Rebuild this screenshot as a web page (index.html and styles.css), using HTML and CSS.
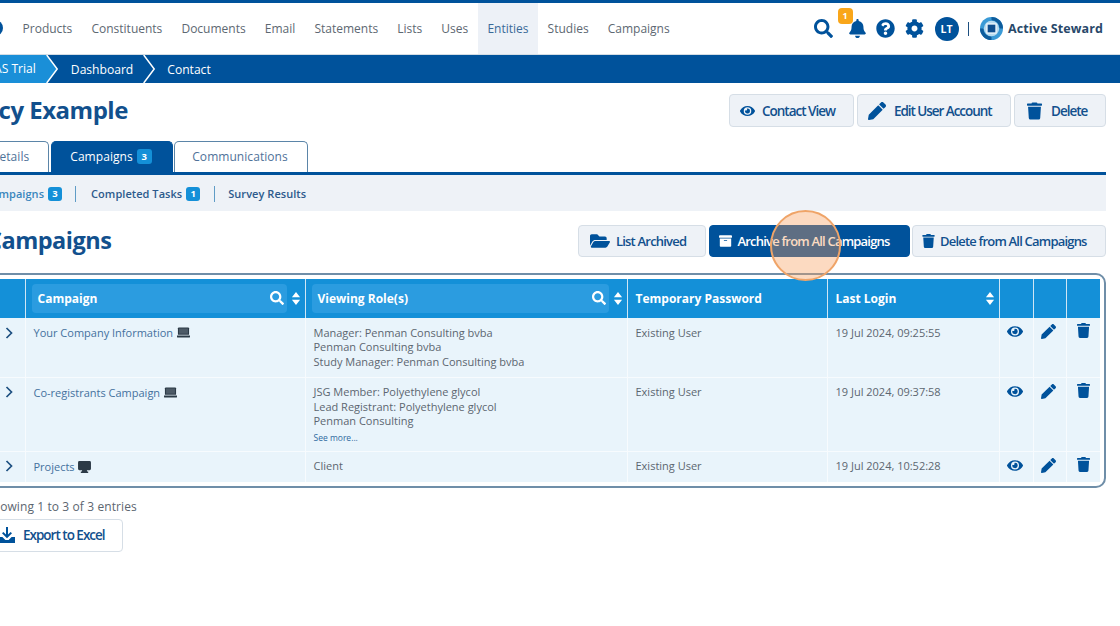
FILE: index.html
```html
<!DOCTYPE html>
<html lang="en">
<head>
<meta charset="utf-8">
<title>Policy Example</title>
<link rel="stylesheet" href="styles.css">
</head>
<body>
<svg class="defs" aria-hidden="true">
  <symbol id="i-search" viewBox="0 0 512 512"><path d="M505 442.7L405.3 343c-4.5-4.5-10.6-7-17-7H372c27.6-35.3 44-79.7 44-128C416 93.1 322.9 0 208 0S0 93.1 0 208s93.1 208 208 208c48.3 0 92.7-16.4 128-44v16.3c0 6.4 2.5 12.5 7 17l99.7 99.7c9.4 9.4 24.6 9.4 33.9 0l28.3-28.3c9.4-9.4 9.4-24.6.1-34zM208 336c-70.7 0-128-57.2-128-128 0-70.7 57.2-128 128-128 70.7 0 128 57.2 128 128 0 70.7-57.2 128-128 128z"/></symbol>
  <symbol id="i-bell" viewBox="0 0 448 512"><path d="M224 512c35.32 0 63.97-28.65 63.97-64H160.03c0 35.35 28.65 64 63.97 64zm215.39-149.71c-19.32-20.76-55.47-51.99-55.47-154.29 0-77.7-54.48-139.9-127.94-155.16V32c0-17.67-14.32-32-31.98-32s-31.98 14.33-31.98 32v20.84C118.56 68.1 64.08 130.3 64.08 208c0 102.3-36.15 133.53-55.47 154.29-6 6.45-8.66 14.16-8.61 21.71.11 16.4 12.98 32 32.1 32h383.8c19.12 0 32-15.6 32.1-32 .05-7.55-2.61-15.27-8.61-21.71z"/></symbol>
  <symbol id="i-help" viewBox="0 0 512 512"><path d="M504 256c0 136.997-111.043 248-248 248S8 392.997 8 256C8 119.083 119.043 8 256 8s248 111.083 248 248zM262.655 90c-54.497 0-89.255 22.957-116.549 63.758-3.536 5.286-2.353 12.415 2.715 16.258l34.699 26.31c5.205 3.947 12.621 3.008 16.665-2.122 17.864-22.658 30.113-35.797 57.303-35.797 20.429 0 45.698 13.148 45.698 32.958 0 14.976-12.363 22.667-32.534 33.976C247.128 238.528 216 254.941 216 296v4c0 6.627 5.373 12 12 12h56c6.627 0 12-5.373 12-12v-1.333c0-28.462 83.186-29.647 83.186-106.667 0-58.002-60.165-102-116.531-102zM256 338c-25.365 0-46 20.635-46 46 0 25.364 20.635 46 46 46s46-20.636 46-46c0-25.365-20.635-46-46-46z"/></symbol>
  <symbol id="i-cog" viewBox="0 0 512 512"><path d="M487.4 315.7l-42.6-24.6c4.3-23.2 4.3-47 0-70.2l42.6-24.6c4.9-2.8 7.1-8.6 5.5-14-11.1-35.6-30-67.8-54.7-94.6-3.8-4.1-10-5.1-14.8-2.3L380.8 110c-17.9-15.4-38.5-27.3-60.8-35.1V25.8c0-5.6-3.9-10.5-9.4-11.7-36.7-8.2-74.3-7.8-109.2 0-5.5 1.2-9.4 6.1-9.4 11.7V75c-22.2 7.9-42.8 19.8-60.8 35.1L88.7 85.5c-4.9-2.8-11-1.9-14.8 2.3-24.7 26.7-43.6 58.9-54.7 94.6-1.7 5.4.6 11.2 5.5 14L67.3 221c-4.3 23.2-4.3 47 0 70.2l-42.6 24.6c-4.9 2.8-7.1 8.6-5.5 14 11.1 35.6 30 67.8 54.7 94.6 3.8 4.1 10 5.1 14.8 2.3l42.6-24.6c17.9 15.4 38.5 27.3 60.8 35.1v49.2c0 5.6 3.9 10.5 9.4 11.7 36.7 8.2 74.3 7.8 109.2 0 5.5-1.2 9.4-6.1 9.4-11.7v-49.2c22.2-7.9 42.8-19.8 60.8-35.1l42.6 24.6c4.9 2.8 11 1.9 14.8-2.3 24.7-26.7 43.6-58.9 54.7-94.6 1.5-5.5-.7-11.3-5.6-14.1zM256 336c-44.1 0-80-35.9-80-80s35.9-80 80-80 80 35.9 80 80-35.9 80-80 80z"/></symbol>
  <symbol id="i-eye" viewBox="0 0 576 512"><path d="M572.52 241.4C518.29 135.59 410.93 64 288 64S57.68 135.64 3.48 241.41a32.35 32.35 0 0 0 0 29.19C57.71 376.41 165.07 448 288 448s230.32-71.64 284.52-177.41a32.35 32.35 0 0 0 0-29.19zM288 400a144 144 0 1 1 144-144 143.93 143.93 0 0 1-144 144zm0-240a95.31 95.31 0 0 0-25.31 3.79 47.85 47.85 0 0 1-66.9 66.9A95.78 95.78 0 1 0 288 160z"/></symbol>
  <symbol id="i-pencil" viewBox="0 0 512 512"><path d="M497.9 142.1l-46.1 46.1c-4.7 4.7-12.3 4.7-17 0l-111-111c-4.7-4.7-4.7-12.3 0-17l46.1-46.1c18.7-18.7 49.1-18.7 67.9 0l60.1 60.1c18.8 18.7 18.8 49.1 0 67.9zM284.2 99.8L21.6 362.4.4 483.9c-2.9 16.4 11.4 30.6 27.8 27.8l121.5-21.3 262.6-262.6c4.7-4.7 4.7-12.3 0-17l-111-111c-4.8-4.7-12.4-4.7-17.1 0z"/></symbol>
  <symbol id="i-trash" viewBox="0 0 448 512"><path d="M432 32H312l-9.4-18.7A24 24 0 0 0 281.1 0H166.8a23.72 23.72 0 0 0-21.4 13.3L136 32H16A16 16 0 0 0 0 48v32a16 16 0 0 0 16 16h416a16 16 0 0 0 16-16V48a16 16 0 0 0-16-16zM53.2 467a48 48 0 0 0 47.9 45h245.8a48 48 0 0 0 47.9-45L416 128H32z"/></symbol>
  <symbol id="i-folder" viewBox="0 0 576 512"><path d="M572.694 292.093L500.27 416.248A63.997 63.997 0 0 1 444.989 448H45.025c-18.523 0-30.064-20.093-20.731-36.093l72.424-124.155A64 64 0 0 1 152 256h399.964c18.523 0 30.064 20.093 20.73 36.093zM152 224h328v-48c0-26.51-21.49-48-48-48H272l-64-64H48C21.49 64 0 85.49 0 112v278.046l69.077-118.418C86.214 242.25 117.989 224 152 224z"/></symbol>
  <symbol id="i-archive" viewBox="0 0 512 512"><path d="M32 448c0 17.7 14.3 32 32 32h384c17.7 0 32-14.3 32-32V160H32v288zm160-212c0-6.6 5.4-12 12-12h104c6.6 0 12 5.4 12 12v8c0 6.6-5.4 12-12 12H204c-6.6 0-12-5.4-12-12v-8zM480 32H32C14.3 32 0 46.3 0 64v48c0 8.8 7.2 16 16 16h480c8.8 0 16-7.2 16-16V64c0-17.7-14.3-32-32-32z"/></symbol>
  <symbol id="i-download" viewBox="0 0 16 16"><path d="M7 0h2v7.5l2.6-2.6 1.4 1.4L8 11.3 3 6.3l1.4-1.4L7 7.5z"/><path d="M0 10h3.4l3 3h3.2l3-3H16v6H0z"/></symbol>
  <symbol id="i-sort" viewBox="0 0 10 14"><path d="M5 0l4.400 5.600H.6zM5 14L.6 8.400h8.800z"/></symbol>
  <symbol id="i-laptop" viewBox="0 0 14 11"><path d="M2 0h10a1 1 0 0 1 1 1v7H1V1a1 1 0 0 1 1-1z" fill="#2c3a46"/><rect x="2.200" y="1.200" width="9.600" height="5.600" fill="#4d5a66"/><path d="M0 8.600h14V10a1 1 0 0 1-1 1H1a1 1 0 0 1-1-1z" fill="#2c3a46"/></symbol>
  <symbol id="i-desktop" viewBox="0 0 14 13"><path d="M1.500 0h11A1.500 1.500 0 0 1 14 1.500v7a1.500 1.500 0 0 1-1.500 1.500h-3l.4 1.500H11V13H3v-1.500h1.100L4.500 10h-3A1.500 1.500 0 0 1 0 8.500v-7A1.500 1.500 0 0 1 1.500 0z" fill="#2c3a46"/></symbol>
</svg>

<div class="topstripe"></div>
<header class="topnav">
  <span class="navlogo"></span>
  <nav class="menu">
    <a class="menu-item">Products</a>
    <a class="menu-item">Constituents</a>
    <a class="menu-item">Documents</a>
    <a class="menu-item">Email</a>
    <a class="menu-item">Statements</a>
    <a class="menu-item">Lists</a>
    <a class="menu-item">Uses</a>
    <a class="menu-item active">Entities</a>
    <a class="menu-item">Studies</a>
    <a class="menu-item">Campaigns</a>
  </nav>
  <div class="tools">
    <svg class="tool tool-search"><use href="#i-search"/></svg>
    <span class="bell">
      <svg class="tool tool-bell"><use href="#i-bell"/></svg>
      <span class="bell-badge">1</span>
    </span>
    <svg class="tool tool-round"><use href="#i-help"/></svg>
    <svg class="tool tool-round"><use href="#i-cog"/></svg>
    <span class="avatar">LT</span>
    <span class="divider"></span>
    <svg class="brand" viewBox="0 0 24 24">
      <circle cx="12" cy="12" r="12" fill="#3a9ad6"/>
      <path d="M12 0a12 12 0 0 1 12 12h-3.500A8.500 8.500 0 0 0 12 3.500zM0 12a12 12 0 0 0 12 12v-3.500A8.500 8.500 0 0 1 3.500 12z" fill="#0e5c9c"/>
      <circle cx="12" cy="12" r="8" fill="#b9dcf0"/>
      <rect x="6.500" y="6.500" width="11" height="11" rx="1" fill="#e8f3fa"/>
      <rect x="8" y="8" width="8" height="8" fill="#0f4f8f"/>
    </svg>
    <span class="brand-name">Active Steward</span>
  </div>
</header>

<div class="crumbs">
  <span class="crumb crumb-first">AS Trial</span>
  <svg class="crumb-arrow arrow-one" viewBox="0 0 14 28"><path d="M0 0h.7l10.500 14L.7 28H0z" fill="#1a8fd8"/><path d="M.7 0l10.500 14L.7 28" fill="none" stroke="#fff" stroke-width="1.500"/></svg>
  <span class="crumb crumb-dash">Dashboard</span>
  <svg class="crumb-arrow arrow-two" viewBox="0 0 14 28"><path d="M.7 0l10.500 14L.7 28" fill="none" stroke="#fff" stroke-width="1.500"/></svg>
  <span class="crumb">Contact</span>
</div>

<main class="page">
  <div class="head-row">
    <h1 class="title">Policy Example</h1>
    <div class="btns">
      <button class="btn btn-contact"><svg class="ico ico-eye"><use href="#i-eye"/></svg>Contact View</button>
      <button class="btn btn-edit"><svg class="ico ico-lg"><use href="#i-pencil"/></svg>Edit User Account</button>
      <button class="btn btn-delete"><svg class="ico ico-lg"><use href="#i-trash"/></svg>Delete</button>
    </div>
  </div>

  <div class="tabs">
    <a class="tab tab-details">Details</a>
    <a class="tab tab-on">Campaigns <span class="badge">3</span></a>
    <a class="tab tab-comm">Communications</a>
  </div>
  <div class="subnav">
    <a class="sub sub-on">Campaigns <span class="badge">3</span></a>
    <a class="sub sub-tasks">Completed Tasks <span class="badge">1</span></a>
    <a class="sub">Survey Results</a>
  </div>

  <div class="section-row">
    <h2 class="section-title">Campaigns</h2>
    <div class="btns">
      <button class="btn btn-sm btn-list"><svg class="ico ico-folder"><use href="#i-folder"/></svg>List Archived</button>
      <button class="btn btn-sm btn-primary"><svg class="ico ico-sm"><use href="#i-archive"/></svg>Archive from All Campaigns</button>
      <button class="btn btn-sm btn-delall"><svg class="ico ico-sm"><use href="#i-trash"/></svg>Delete from All Campaigns</button>
    </div>
  </div>

  <div class="table-frame">
    <table class="grid">
      <colgroup>
        <col class="c1"><col class="c2"><col class="c3"><col class="c4"><col class="c5"><col class="c6"><col class="c7"><col class="c8">
      </colgroup>
      <thead>
        <tr>
          <th></th>
          <th class="th-filter"><div class="filter"><span>Campaign</span><svg class="th-search"><use href="#i-search"/></svg></div><svg class="th-sort"><use href="#i-sort"/></svg></th>
          <th class="th-filter"><div class="filter"><span>Viewing Role(s)</span><svg class="th-search"><use href="#i-search"/></svg></div><svg class="th-sort"><use href="#i-sort"/></svg></th>
          <th class="th-plain">Temporary Password</th>
          <th class="th-plain th-last"><span>Last Login</span><svg class="th-sort"><use href="#i-sort"/></svg></th>
          <th></th><th></th><th></th>
        </tr>
      </thead>
      <tbody>
        <tr class="r1">
          <td class="chev"><svg viewBox="0 0 8 12"><path d="M1.500 1l5 5-5 5" fill="none" stroke="#1d4f80" stroke-width="1.700"/></svg></td>
          <td class="link">Your Company Information <svg class="dev"><use href="#i-laptop"/></svg></td>
          <td>Manager: Penman Consulting bvba<br>Penman Consulting bvba<br>Study Manager: Penman Consulting bvba</td>
          <td>Existing User</td>
          <td>19 Jul 2024, 09:25:55</td>
          <td class="act"><svg class="act-eye"><use href="#i-eye"/></svg></td>
          <td class="act"><svg class="act-pen"><use href="#i-pencil"/></svg></td>
          <td class="act"><svg class="act-trash"><use href="#i-trash"/></svg></td>
        </tr>
        <tr class="r2">
          <td class="chev"><svg viewBox="0 0 8 12"><path d="M1.500 1l5 5-5 5" fill="none" stroke="#1d4f80" stroke-width="1.700"/></svg></td>
          <td class="link">Co-registrants Campaign <svg class="dev"><use href="#i-laptop"/></svg></td>
          <td>JSG Member: Polyethylene glycol<br>Lead Registrant: Polyethylene glycol<br>Penman Consulting<div class="more">See more...</div></td>
          <td>Existing User</td>
          <td>19 Jul 2024, 09:37:58</td>
          <td class="act"><svg class="act-eye"><use href="#i-eye"/></svg></td>
          <td class="act"><svg class="act-pen"><use href="#i-pencil"/></svg></td>
          <td class="act"><svg class="act-trash"><use href="#i-trash"/></svg></td>
        </tr>
        <tr class="r3">
          <td class="chev"><svg viewBox="0 0 8 12"><path d="M1.500 1l5 5-5 5" fill="none" stroke="#1d4f80" stroke-width="1.700"/></svg></td>
          <td class="link">Projects <svg class="dev dev-desk"><use href="#i-desktop"/></svg></td>
          <td>Client</td>
          <td>Existing User</td>
          <td>19 Jul 2024, 10:52:28</td>
          <td class="act"><svg class="act-eye"><use href="#i-eye"/></svg></td>
          <td class="act"><svg class="act-pen"><use href="#i-pencil"/></svg></td>
          <td class="act"><svg class="act-trash"><use href="#i-trash"/></svg></td>
        </tr>
      </tbody>
    </table>
  </div>

  <p class="entries">Showing 1 to 3 of 3 entries</p>
  <button class="btn btn-export"><svg class="ico ico-dl"><use href="#i-download"/></svg>Export to Excel</button>
</main>

<div class="spot"></div>
</body>
</html>
```

FILE: styles.css
```css
* { box-sizing: border-box; }
html, body { margin: 0; padding: 0; }
body {
  width: 1120px;
  height: 626px;
  overflow: hidden;
  position: relative;
  background: #fff;
  font-family: "Open Sans", "Liberation Sans", sans-serif;
  font-size: 12px;
  color: #5c6670;
}
.defs { display: none; }
svg { fill: currentColor; display: block; }

.topstripe { height: 3px; background: #00529b; }
.topnav {
  height: 52px;
  display: flex;
  align-items: stretch;
  border-bottom: 1px solid #d4dde4;
  background: #fff;
}
.navlogo {
  width: 16px;
  height: 16px;
  margin: 17px 0 0 -13px;
  border-radius: 50%;
  background: #00529b;
  flex: none;
}
.menu { display: flex; margin-left: 10px; }
.menu-item {
  display: flex;
  align-items: center;
  padding: 0 9.56px;
  font-size: 12px;
  color: #5d6872;
}
.menu-item.active { background: #edf1f7; color: #3a6a98; }
.tools {
  margin-left: auto;
  display: flex;
  align-items: center;
  padding-right: 17px;
  color: #00529b;
}
.tool-search { width: 19px; height: 19px; margin-right: 16px; }
.bell { position: relative; display: block; margin-right: 10px; }
.tool-bell { width: 17px; height: 19px; }
.bell-badge {
  position: absolute;
  left: -11px;
  top: -11px;
  width: 15px;
  height: 16px;
  border-radius: 4px;
  background: #f9a61a;
  color: #fff;
  font-size: 9px;
  font-weight: 700;
  line-height: 15px;
  text-align: center;
}
.tool-round { width: 19px; height: 19px; margin-right: 10px; }
.avatar {
  width: 24px;
  height: 24px;
  border-radius: 50%;
  background: #00529b;
  color: #fff;
  font-size: 10.5px;
  font-weight: 700;
  text-align: center;
  line-height: 24px;
  margin-left: 1px;
}
.divider { width: 1.5px; height: 14px; background: #1d4f80; margin: 0 11px 0 9px; }
.brand { width: 23px; height: 23px; }
.brand-name { font-size: 12.5px; font-weight: 700; color: #28486a; margin-left: 5px; letter-spacing: 0.1px; }

.crumbs {
  height: 28px;
  background: #00529b;
  display: flex;
  align-items: center;
  color: #fff;
  font-size: 12.1px;
}
.crumb { white-space: nowrap; }
.crumb-first {
  background: #1a8fd8;
  height: 28px;
  line-height: 28px;
  margin-left: -6px;
  padding-right: 10px;
}
.crumb-arrow { width: 14px; height: 28px; flex: none; }
.arrow-one { margin-right: 11px; }
.crumb-dash { margin-right: 9.5px; }
.arrow-two { margin-right: 10.5px; }

.page { margin-left: -60px; width: 1166px; }
.head-row {
  height: 58px;
  display: flex;
  align-items: flex-start;
  justify-content: space-between;
}
.title {
  margin: 9px 0 0 16px;
  font-size: 24px;
  line-height: 36px;
  font-weight: 700;
  color: #12508d;
  letter-spacing: -0.5px;
  white-space: nowrap;
}
.btns { display: flex; gap: 3px; margin-top: 11px; }
.btn {
  height: 33px;
  display: flex;
  align-items: center;
  justify-content: flex-start;
  border: 1px solid #d6dee6;
  border-radius: 4px;
  background: #eef2f7;
  color: #12508d;
  font-family: inherit;
  font-size: 13.5px;
  font-weight: 600;
  letter-spacing: -1px;
  padding: 0;
  white-space: nowrap;
}
.btn-contact { width: 125px; padding-left: 10px; }
.btn-edit { width: 154px; padding-left: 10px; letter-spacing: -1.05px; }
.btn-delete { width: 92px; padding-left: 12px; }
.ico { flex: none; color: #00529b; }
.ico-eye { width: 15px; height: 14px; margin-right: 7px; }
.ico-lg { width: 18px; height: 18px; margin-right: 8px; }
.btn-delete .ico-lg { width: 15px; margin-right: 9px; }

.tabs { display: flex; gap: 1px; padding-left: 31px; align-items: flex-end; height: 31px; }
.tab {
  height: 31px;
  display: flex;
  align-items: center;
  justify-content: center;
  gap: 4px;
  border: 1px solid #5b85a8;
  border-bottom: 0;
  border-radius: 5px 5px 0 0;
  background: #fff;
  color: #4f7299;
  font-size: 12px;
  letter-spacing: 0.05px;
  padding: 0 2px 1px 0;
}
.tab-details { width: 78px; margin-right: 1px; padding-right: 0; }
.tab-on { width: 122px; background: #00529b; border-color: #00529b; color: #fff; }
.tab-comm { width: 134px; }
.badge {
  display: inline-block;
  min-width: 14px;
  height: 14px;
  line-height: 14px;
  border-radius: 3px;
  background: #1490d8;
  color: #fff;
  font-size: 9.5px;
  font-weight: 700;
  text-align: center;
}
.tab .badge { min-width: 15px; height: 15px; line-height: 15px; }
.subnav {
  height: 39px;
  border-top: 3px solid #00529b;
  background: #eef2f7;
  display: flex;
  align-items: center;
  padding-left: 45px;
}
.sub {
  display: flex;
  align-items: center;
  gap: 4px;
  font-size: 11px;
  font-weight: 600;
  letter-spacing: 0.05px;
  color: #2c5a8c;
  padding-right: 14px;
  margin-right: 14px;
  height: 16px;
  border-right: 1px solid #5f9cc6;
  white-space: nowrap;
  position: relative;
  top: 0.5px;
}
.sub-on { color: #3a86bd; padding-right: 13px; margin-right: 15px; }
.sub-tasks { margin-right: 13px; }
.sub:last-child { border-right: 0; }

.section-row {
  height: 62px;
  display: flex;
  justify-content: space-between;
  align-items: flex-start;
}
.section-title {
  margin: 13px 0 0 47px;
  font-size: 23.5px;
  line-height: 32px;
  font-weight: 700;
  color: #12508d;
  letter-spacing: -0.5px;
}
.section-row .btns { margin-top: 14px; gap: 2.500px; }
.btn-sm { height: 32px; font-size: 13px; letter-spacing: -0.8px; }
.btn-list { width: 128px; padding-left: 11px; }
.btn-list .ico { margin-right: 6px; }
.btn-primary { width: 201px; background: #00529b; border-color: #00529b; color: #fff; padding-left: 9px; }
.btn-primary .ico { color: #fff; }
.btn-delall { width: 194px; padding-left: 9px; }
.btn-delall .ico { margin-right: 5px; }
.ico-folder { width: 20px; height: 18px; margin-right: 7px; }
.ico-sm { width: 13px; height: 14px; margin-right: 6px; }

.table-frame {
  border: 2px solid #6f8ea8;
  border-radius: 10px;
  padding: 4px;
  height: 215px;
}
.grid {
  table-layout: fixed;
  width: 1154px;
  border-collapse: collapse;
}
.c1 { width: 79px; } .c2 { width: 280px; } .c3 { width: 322px; } .c4 { width: 200px; }
.c5 { width: 172px; } .c6 { width: 34px; } .c7 { width: 33px; } .c8 { width: 34px; }
.grid th {
  height: 39px;
  background: #1490d8;
  color: #fff;
  font-weight: 700;
  font-size: 12px;
  text-align: left;
  padding: 0;
  border-right: 1px solid #cfe6f5;
  position: relative;
}
.grid th:last-child { border-right: 0; }
.grid .th-plain { padding-left: 8px; padding-right: 8px; }
.th-last span { display: block; }
.filter {
  height: 29px;
  margin: -1px 18px 0 6px;
  padding: 0 3px 0 6px;
  border-radius: 4px;
  background: #2b9ce0;
  display: flex;
  align-items: center;
  justify-content: space-between;
}
.th-filter { vertical-align: middle; }
.th-search { width: 14px; height: 14px; }
.th-sort { width: 10px; height: 13px; position: absolute; right: 4px; top: 13px; }
.grid td {
  background: #e9f4fb;
  padding: 7.5px 8px 0;
  vertical-align: top;
  line-height: 14.6px;
  border-right: 1px solid #f7fbfe;
  border-bottom: 1px solid #f7fbfe;
  font-size: 11px;
  color: #5c6670;
}
.grid tr:last-child td { border-bottom: 0; }
.grid td:last-child { border-right: 0; }
.r1 td { height: 59px; }
.r2 td { height: 74px; }
.r3 td { height: 31px; }
.grid .chev svg { width: 8px; height: 12px; margin: 1px 0 0 59px; }
.grid .chev { padding-left: 0; }
.grid td.link { color: #44719e; padding-top: 8px; }
.dev { display: inline-block; width: 13px; height: 11px; vertical-align: -1px; margin-left: 1px; }
.dev-desk { width: 13px; height: 12px; vertical-align: -2px; }
.more { font-size: 8.5px; color: #2f6a9f; line-height: 17px; }
.grid td.act { color: #00529b; padding: 6px 0 0; }
.act-eye { width: 16px; height: 15px; margin-left: 7px; }
.act-pen { width: 15px; height: 15px; margin-left: 7px; }
.act-trash { width: 13px; height: 15px; margin-left: 10px; position: relative; top: -1px; }
.entries { margin: 9.5px 0 0 46px; font-size: 12px; line-height: 17px; color: #5c6670; letter-spacing: 0.1px; }
.btn-export {
  margin: 4px 0 0;
  width: 183px;
  background: #fff;
  padding-left: 58px;
}
.ico-dl { width: 16px; height: 16px; margin-right: 8px; }

.spot {
  position: absolute;
  left: 770px;
  top: 210px;
  width: 71px;
  height: 71px;
  border-radius: 50%;
  background: rgba(246, 158, 92, 0.38);
  border: 2.500px solid #efa468;
}
```
